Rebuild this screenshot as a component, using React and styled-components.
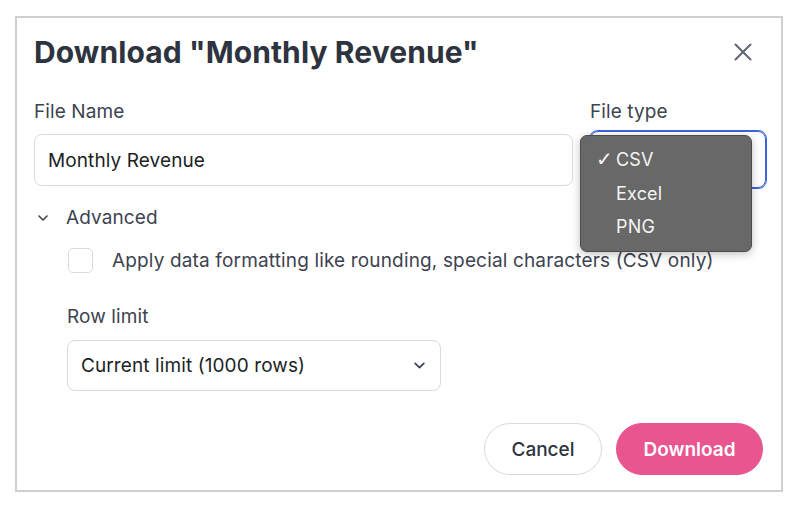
import React from 'react';
import styled, { createGlobalStyle } from 'styled-components';

const COLORS = {
  text: '#2e3340',
  body: '#3d4350',
  border: '#d6dae1',
  focus: '#3a64d8',
  pink: '#e9568f',
  menu: '#686868',
};

const GlobalStyle = createGlobalStyle`
  * { box-sizing: border-box; }
  body {
    margin: 0;
    background: #fff;
    font-family: Inter, "Noto Sans", sans-serif;
    color: ${COLORS.text};
  }
`;

const Page = styled.div`
  width: 800px;
  height: 508px;
  padding: 16px 17px 16px 15px;
`;

const Dialog = styled.div`
  height: 476px;
  border: 2px solid #cfcfcf;
  padding: 14px 15px 0 17px;
  display: flex;
  flex-direction: column;
`;

const Header = styled.div`
  display: flex;
  align-items: center;
  justify-content: space-between;
  height: 40px;
`;

const Title = styled.h1`
  margin: 0;
  font-size: 30px;
  font-weight: 700;
  letter-spacing: 0.1px;
  color: ${COLORS.text};
`;

const CloseButton = styled.button`
  border: none;
  background: none;
  padding: 0;
  margin-right: 11px;
  width: 24px;
  height: 24px;
  display: flex;
  align-items: center;
  justify-content: center;
  color: #5f6570;
`;

const FieldRow = styled.div`
  display: flex;
  gap: 17px;
  margin-top: 29px;
`;

const Field = styled.div`
  display: flex;
  flex-direction: column;
  gap: 11px;
  width: ${p => p.$width};
  flex-shrink: 0;
  position: relative;
`;

const Label = styled.label`
  font-size: 19px;
  letter-spacing: 0.1px;
  color: ${COLORS.body};
  line-height: 22px;
`;

const TextBox = styled.div`
  border: 1px solid ${p => (p.$focused ? COLORS.focus : COLORS.border)};
  box-shadow: ${p => (p.$focused ? `0 0 0 1px ${COLORS.focus}` : 'none')};
  border-radius: 8px;
  display: flex;
  align-items: center;
  justify-content: space-between;
  padding: 0 14px 0 13px;
  font-size: 19px;
  letter-spacing: 0.1px;
  color: #1c1f26;
  margin-top: ${p => (p.$focused ? '-3px' : '0')};
  height: ${p => (p.$focused ? '57px' : '52px')};
`;

const Menu = styled.div`
  position: absolute;
  left: -10px;
  top: 34px;
  width: 172px;
  height: 117px;
  background: ${COLORS.menu};
  border: 1px solid #4d4d4d;
  border-radius: 7px;
  box-shadow: 0 2px 8px rgba(0, 0, 0, 0.25);
  padding: 7px 0;
  display: flex;
  flex-direction: column;
`;

const MenuItem = styled.div`
  height: 33.5px;
  display: flex;
  align-items: center;
  padding-left: 35px;
  position: relative;
  color: #f4f4f4;
  font-size: 18px;
  letter-spacing: 0.2px;
`;

const Check = styled.span`
  position: absolute;
  left: 15px;
  top: 4px;
  font-size: 20px;
  font-weight: 700;
  font-family: "DejaVu Sans", sans-serif;
`;

const Advanced = styled.div`
  display: flex;
  align-items: center;
  gap: 17px;
  margin-top: 18px;
  margin-left: 3px;
  font-size: 19px;
  letter-spacing: 0.1px;
  color: ${COLORS.body};
`;

const Indented = styled.div`
  padding-left: 33px;
  display: flex;
  flex-direction: column;
`;

const CheckRow = styled.div`
  display: flex;
  align-items: center;
  gap: 19px;
  margin-top: 19px;
  font-size: 19px;
  letter-spacing: 0.15px;
  color: ${COLORS.body};
`;

const CheckBox = styled.span`
  width: 25px;
  height: 25px;
  border: 1px solid ${COLORS.border};
  border-radius: 5px;
  margin-left: 1px;
`;

const RowLimit = styled.div`
  display: flex;
  flex-direction: column;
  gap: 12px;
  margin-top: 33px;
  width: 374px;
`;

const SelectBox = styled(TextBox)`
  height: 51px;
`;

const Footer = styled.div`
  display: flex;
  justify-content: flex-end;
  gap: 14px;
  margin-top: 32px;
  padding-right: 3px;
`;

const Button = styled.button`
  height: 52px;
  border-radius: 26px;
  font-family: inherit;
  font-size: 19px;
  font-weight: ${p => (p.$primary ? 600 : 500)};
  padding: 0;
  border: 1px solid ${p => (p.$primary ? COLORS.pink : COLORS.border)};
  background: ${p => (p.$primary ? COLORS.pink : '#fff')};
  color: ${p => (p.$primary ? '#fff' : COLORS.text)};
  width: ${p => p.$width};
`;

const Chevron = ({ size = 12 }) => (
  <svg width={size} height={size} viewBox="0 0 12 12" fill="none">
    <path d="M2 4l4 4 4-4" stroke="#3d4350" strokeWidth="1.6" strokeLinecap="round" strokeLinejoin="round" />
  </svg>
);

const App = () => (
  <>
    <GlobalStyle />
    <Page>
      <Dialog>
        <Header>
          <Title>Download "Monthly Revenue"</Title>
          <CloseButton aria-label="Close">
            <svg width="18" height="18" viewBox="0 0 18 18">
              <path d="M1.5 1.5l15 15M16.5 1.5l-15 15" stroke="currentColor" strokeWidth="2" strokeLinecap="round" />
            </svg>
          </CloseButton>
        </Header>

        <FieldRow>
          <Field $width="539px">
            <Label>File Name</Label>
            <TextBox>Monthly Revenue</TextBox>
          </Field>
          <Field $width="176px">
            <Label>File type</Label>
            <TextBox $focused />
            <Menu>
              <MenuItem><Check>✓</Check>CSV</MenuItem>
              <MenuItem>Excel</MenuItem>
              <MenuItem>PNG</MenuItem>
            </Menu>
          </Field>
        </FieldRow>

        <Advanced>
          <Chevron />
          Advanced
        </Advanced>

        <Indented>
          <CheckRow>
            <CheckBox />
            Apply data formatting like rounding, special characters (CSV only)
          </CheckRow>
          <RowLimit>
            <Label>Row limit</Label>
            <SelectBox>
              Current limit (1000 rows)
              <Chevron size={13} />
            </SelectBox>
          </RowLimit>
        </Indented>

        <Footer>
          <Button $width="118px">Cancel</Button>
          <Button $primary $width="147px">Download</Button>
        </Footer>
      </Dialog>
    </Page>
  </>
);

export default App;
